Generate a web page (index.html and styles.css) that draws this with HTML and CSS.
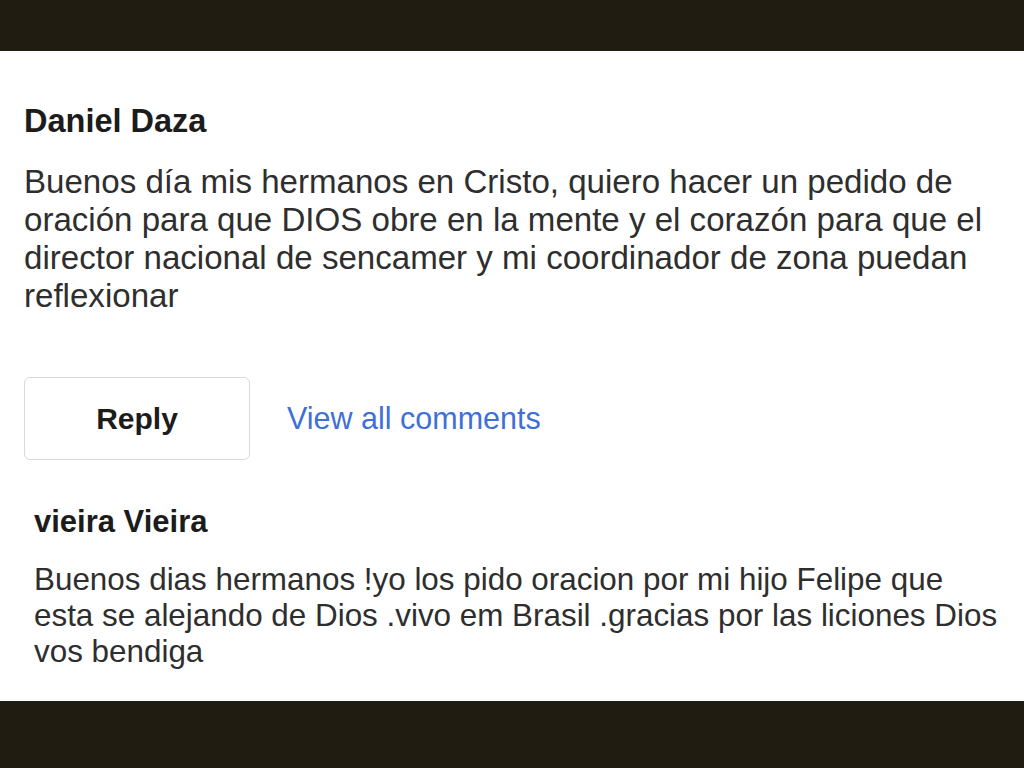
FILE: index.html
```html
<!DOCTYPE html>
<html lang="es">
<head>
  <meta charset="UTF-8" />
  <title>Comments</title>
  <link rel="stylesheet" href="styles.css">
</head>
<body>
  <div class="bar"></div>

  <div class="feed">
    <div class="comment">
      <div class="author">Daniel Daza</div>
      <p class="text">Buenos día mis hermanos en Cristo, quiero hacer un pedido de oración para que DIOS obre en la mente y el corazón para que el director nacional de sencamer y mi coordinador de zona puedan reflexionar</p>
      <div class="actions">
        <button class="reply">Reply</button>
        <a href="#" class="view-all">View all comments</a>
      </div>
    </div>

    <div class="comment nested">
      <div class="author">vieira Vieira</div>
      <p class="text">Buenos dias hermanos !yo los pido oracion por mi hijo Felipe que esta se alejando de Dios .vivo em Brasil .gracias por las liciones Dios vos bendiga</p>
    </div>
  </div>

  <div class="bar bottom"></div>
</body>
</html>
```

FILE: styles.css
```css
body {
  margin: 0;
  background-color: white;
  font-family: 'Liberation Sans', Arial, sans-serif;
  color: #2e2e2e;
}
.bar {
  height: 51px;
  background-color: #201c12;
}
.bar.bottom {
  height: 67px;
}
.feed {
  height: 650px;
  padding: 0 14px 0 24px;
  overflow: hidden;
}
.comment {
  padding-top: 51px;
}
.author {
  font-size: 32.5px;
  line-height: 38px;
  font-weight: bold;
  color: #1c1c1c;
}
.text {
  margin: 23px 0 0;
  font-size: 33.1px;
  line-height: 38px;
}
.actions {
  display: flex;
  align-items: center;
  gap: 37px;
  margin-top: 62px;
}
.reply {
  width: 226px;
  height: 83px;
  background: white;
  border: 1px solid #d9d9d9;
  border-radius: 6px;
  font-family: inherit;
  font-size: 30px;
  font-weight: bold;
  color: #1c1c1c;
  cursor: pointer;
}
.view-all {
  font-size: 30.5px;
  color: #3f6fd8;
  text-decoration: none;
}
.nested {
  padding: 44px 6px 0 10px;
}
.nested .author {
  font-size: 31px;
  line-height: 36px;
}
.nested .text {
  margin-top: 22px;
  font-size: 31.4px;
  line-height: 36px;
}
```
